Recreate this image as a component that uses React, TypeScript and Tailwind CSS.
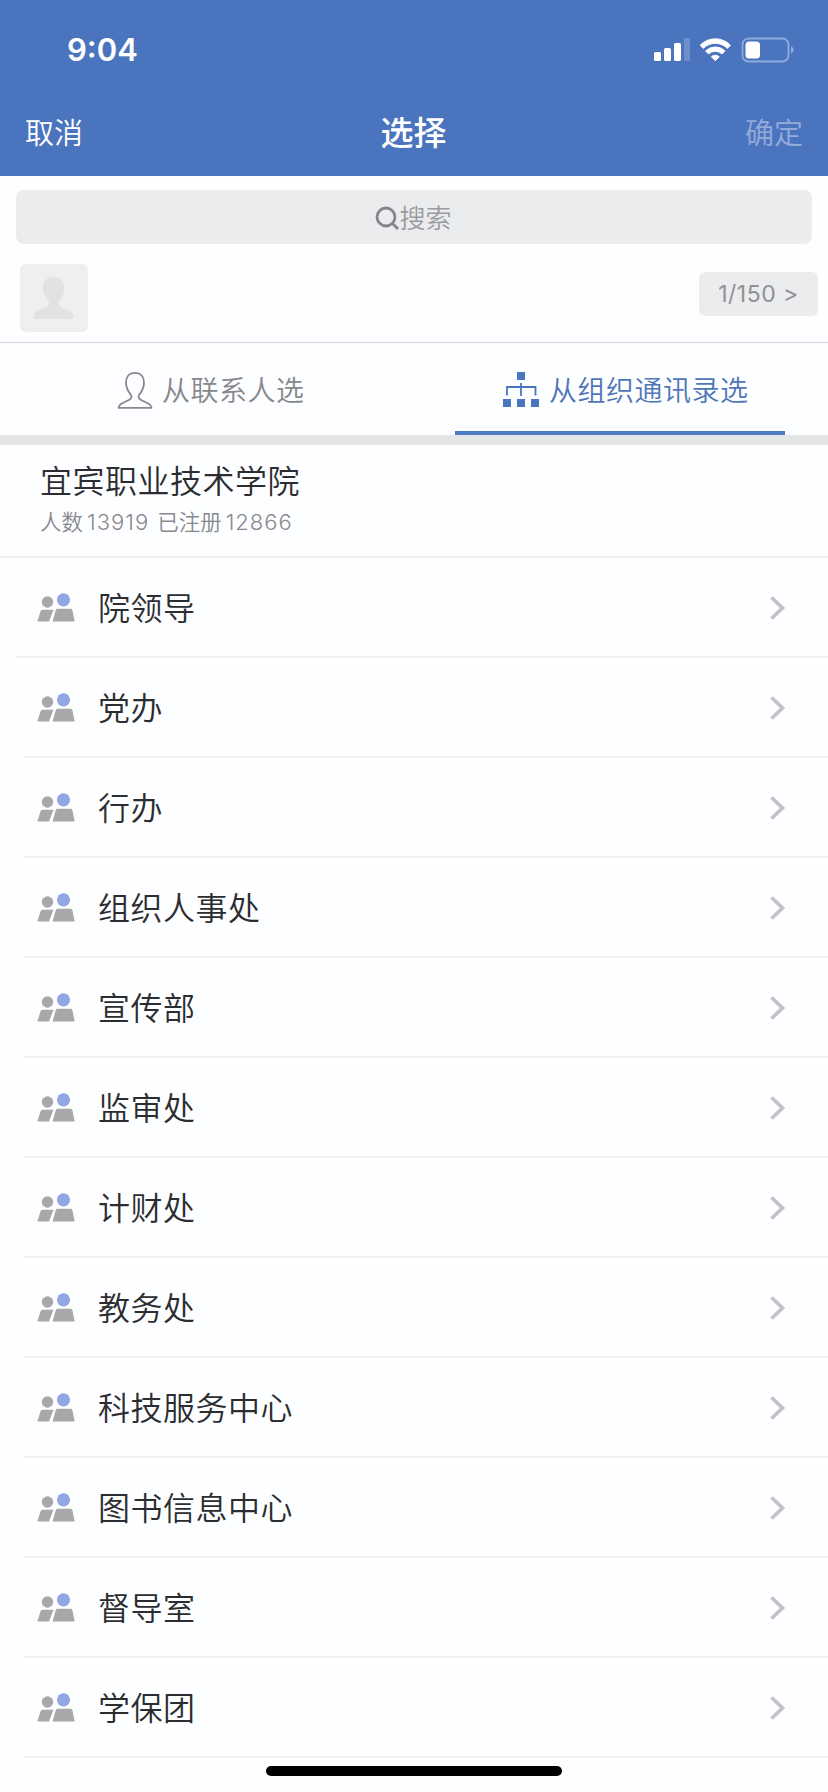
const departments = [
  "院领导",
  "党办",
  "行办",
  "组织人事处",
  "宣传部",
  "监审处",
  "计财处",
  "教务处",
  "科技服务中心",
  "图书信息中心",
  "督导室",
  "学保团",
];

function StatusIcons() {
  return (
    <svg width="144" height="32" viewBox="0 0 144 32" fill="none">
      <rect x="3" y="18" width="7" height="9" rx="1.5" fill="#fff" />
      <rect x="13" y="14" width="7" height="13" rx="1.5" fill="#fff" />
      <rect x="23" y="9" width="7" height="18" rx="1.5" fill="#fff" />
      <rect x="33" y="4" width="6" height="23" rx="1.5" fill="#fff" opacity="0.2" />
      <path d="M49.2 11.2a21 21 0 0 1 30.2 0l-3 3.2a17 17 0 0 0-24.2 0z" fill="#fff" stroke="#fff" strokeWidth="1" strokeLinejoin="round" />
      <path d="M54.6 17a13.600 13.600 0 0 1 19.400 0l-3 3a9.500 9.500 0 0 0-13.400 0z" fill="#fff" stroke="#fff" strokeWidth="1" strokeLinejoin="round" />
      <path d="M60.400 22.700a5.800 5.800 0 0 1 7.800 0l-3.900 4z" fill="#fff" stroke="#fff" strokeWidth="1" strokeLinejoin="round" />
      <rect x="91.500" y="4.500" width="46" height="23" rx="6" stroke="#8eaae0" strokeWidth="1.800" />
      <rect x="94.500" y="7.500" width="14.500" height="17" rx="3.500" fill="#fff" />
      <path d="M140 12.300v7.400q2.700-1.200 2.700-3.700t-2.700-3.700z" fill="#8eaae0" />
    </svg>
  );
}

function PersonOutline() {
  return (
    <svg width="36" height="38" viewBox="0 0 36 38" fill="none" stroke="#87888c" strokeWidth="1.800" strokeLinejoin="round">
      <path d="M18 1.800C12 1.800 9 6 9 11.600c0 5 2 8.600 4.400 11.500 1.400 1.700 1.600 3.900-.7 5.400-2.600 1.800-6 2.700-8.700 4.500-1.900 1.300-2.500 2.400-2.500 3.800h33c0-1.400-.6-2.500-2.500-3.800-2.700-1.800-6.100-2.700-8.700-4.500-2.300-1.500-2.100-3.700-.7-5.400C25 20.200 27 16.600 27 11.600 27 6 24 1.800 18 1.800z" />
    </svg>
  );
}

function OrgChart() {
  return (
    <svg width="36" height="35" viewBox="0 0 36 35" fill="#4b76be">
      <path d="M14 0h8v8h-8zM0 27h8v8H0zM14 27h8v8h-8zM28 27h8v8h-8z" />
      <path d="M18 11v13M4 23.500v-8.500h28.500v8.500" fill="none" stroke="#4b76be" strokeWidth="1.800" />
    </svg>
  );
}

function Avatar() {
  return (
    <div className="mt-[9px] flex h-[68px] w-[68px] items-center justify-center rounded-md bg-[#eeeff1]">
      <svg width="44" height="44" viewBox="0 0 44 44" fill="#e1e2e4">
        <path d="M21 1c-6 0-10 4-10 10 0 6 2 11 5.500 14 1.500 2 .5 4-1.500 5.500C10 34 3 34 1.500 40c-.3 2 .5 3 2 3h36c1.500 0 2.300-1 2-3C40 34 33 34 28 30.500c-2-1.500-2.500-3.500-1-5.500 3.500-3 5-8 5-14C32 5 28 1 21 1z" />
      </svg>
    </div>
  );
}

function GroupIcon() {
  return (
    <svg className="shrink-0" width="38" height="29" viewBox="0 0 38 29">
      <circle cx="10.500" cy="9" r="5.700" fill="#a7a8aa" />
      <circle cx="26.500" cy="6.800" r="6.600" fill="#92a7e2" />
      <path d="M5.500 16.800h11L12 28.500H.3l3.300-10.300q.5-1.400 1.900-1.400z" fill="#a7a8aa" />
      <path d="M20.500 15.800h13q1.400 0 1.900 1.400l2.300 11.300H15.500l3.200-11.300q.5-1.400 1.800-1.400z" fill="#a7a8aa" />
    </svg>
  );
}

function Row({ name, first }: { name: string; first: boolean }) {
  return (
    <li className={first ? "h-[100px] pl-4" : "h-[100px] pl-6"}>
      <div className="flex h-full items-center border-b-2 border-[#f1f2f4] pt-px">
        <div className={first ? "flex flex-1 items-center pl-[21px]" : "flex flex-1 items-center pl-[13px]"}>
          <GroupIcon />
          <span className="ml-[23px] pt-[3px] text-[32px] leading-[46px] tracking-[0.5px] font-[350] text-[#2c2d30]">{name}</span>
        </div>
        <svg className="mr-[42px]" width="17" height="26" viewBox="0 0 17 26" fill="none" stroke="#c2c3c6" strokeWidth="3.800">
          <path d="M2.500 2.500 13.500 13 2.500 23.500" />
        </svg>
      </div>
    </li>
  );
}

export default function App() {
  return (
    <div className="flex h-[1792px] w-[828px] flex-col overflow-hidden bg-[#fdfeff] font-['Inter','Noto_Sans_CJK_SC',sans-serif]">
      <header className="h-[176px] shrink-0 bg-[#4b74be] text-white">
        <div className="flex h-[100px] items-center justify-between pr-[33px] pl-[67px]">
          <span className="text-[31px] leading-10 font-semibold">9:04</span>
          <StatusIcons />
        </div>
        <div className="grid h-[66px] grid-cols-3 items-center px-[25px] text-[29px] leading-[44px]">
          <span className="pt-[2px] font-[350]">取消</span>
          <span className="pr-px pb-px text-center text-[33px] font-medium">选择</span>
          <span className="pt-[2px] text-right font-[350] text-[#93abda]">确定</span>
        </div>
      </header>

      <div className="mx-4 mt-[14px] flex h-[54px] shrink-0 items-center justify-center rounded-lg bg-[#ebecee] pt-0.5 pr-px text-[#9a9b9e]">
        <svg width="24" height="24" viewBox="0 0 24 24" fill="none" stroke="#85868a" strokeWidth="2.800">
          <circle cx="11" cy="11" r="9" />
          <path d="m17.500 17.500 5.500 5.500" />
        </svg>
        <span className="pt-0.5 text-[26px] leading-9 font-[350]">搜索</span>
      </div>

      <div className="flex h-[99px] shrink-0 items-center justify-between border-b border-[#d4d5d8] pt-px pr-[10px] pl-5">
        <Avatar />
        <div className="flex h-[44px] w-[119px] items-center justify-center rounded-md bg-[#ebecee] pt-0.5 text-[23px] tracking-[0.5px] text-[#909194]">
          1/150 &gt;
        </div>
      </div>

      <nav className="flex h-[92px] shrink-0 text-[28px] font-[350] tracking-[0.5px]">
        <div className="flex w-[455px] items-center pt-0.5 pl-[117px] text-[#87888c]">
          <PersonOutline />
          <span className="ml-[9px] pt-0.5">从联系人选</span>
        </div>
        <div className="flex w-[330px] items-center border-b-4 border-[#4b7bc4] pt-[5px] pl-[48px] text-[#5076b8]">
          <OrgChart />
          <span className="ml-[10px] pt-0.5">从组织通讯录选</span>
        </div>
      </nav>
      <div className="h-[10px] shrink-0 bg-[#e4e5e7]" />

      <section className="flex h-[113px] shrink-0 flex-col border-b-2 border-[#eff0f2] pt-[15px] pl-[40px]">
        <h2 className="text-[32px] leading-[44px] font-[350] tracking-[0.5px] text-[#2c2d30]">宜宾职业技术学院</h2>
        <p className="flex text-[22px] leading-9 font-[350] text-[#88898d]">
          <span className="text-[21.500px]">人数</span>
          <span className="ml-[4px] tracking-[1px]">13919</span>
          <span className="ml-[8px] text-[21.500px]">已注册</span>
          <span className="ml-[4px] tracking-[1px]">12866</span>
        </p>
      </section>

      <ul className="shrink-0">
        {departments.map((name, index) => (
          <Row key={name} name={name} first={index === 0} />
        ))}
      </ul>

      <div className="mt-[8px] h-[10px] w-[296px] shrink-0 self-center rounded-full bg-black" />
    </div>
  );
}
